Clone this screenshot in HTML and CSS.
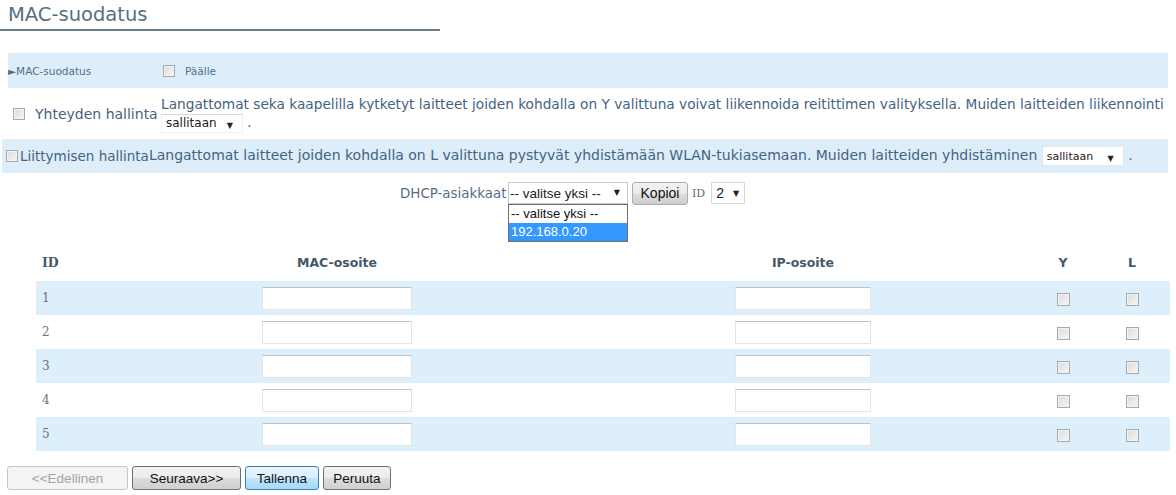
FILE: index.html
```html
<!doctype html>
<html lang="fi">
<head>
	<meta charset="utf-8">
	<title>MAC-suodatus</title>
	<link rel="stylesheet" href="styles.css">
</head>

<body>
	<h1 class="title">MAC-suodatus</h1>

	<div class="opt band first">
		<span class="opt-name">&#9658;MAC-suodatus</span>
		<label class="chk"><input type="checkbox"> Päälle</label>
	</div>

	<div class="opt second">
		<label class="chk big"><input type="checkbox"> Yhteyden hallinta</label>
		<div class="desc">
			Langattomat seka kaapelilla kytketyt laitteet joiden kohdalla on Y valittuna voivat liikennoida reitittimen valityksella. Muiden laitteiden liikennointi
			<span class="sel"><select><option>sallitaan</option><option>estetään</option></select></span> .
		</div>
	</div>

	<div class="opt band third">
		<label class="chk tight"><input type="checkbox">Liittymisen hallinta</label>
		<div class="desc">
			Langattomat laitteet joiden kohdalla on L valittuna pystyvät yhdistämään WLAN-tukiasemaan. Muiden laitteiden yhdistäminen
			<span class="sel"><select><option>sallitaan</option><option>estetään</option></select></span> .
		</div>
	</div>

	<div class="dhcp">
		<span class="dhcp-label">DHCP-asiakkaat</span>
		<span class="sel wide">
			<select><option>-- valitse yksi --</option><option>192.168.0.20</option></select>
			<ul class="droplist">
				<li>-- valitse yksi --</li>
				<li class="hl">192.168.0.20</li>
			</ul>
		</span>
		<button class="btn copy">Kopioi</button>
		<span class="id-label">ID</span>
		<span class="sel small"><select><option>1</option><option selected>2</option><option>3</option><option>4</option><option>5</option></select></span>
	</div>

	<table class="macs">
		<tr>
			<th class="c-id">ID</th>
			<th class="c-mac">MAC-osoite</th>
			<th class="c-ip">IP-osoite</th>
			<th class="c-y">Y</th>
			<th class="c-l">L</th>
		</tr>
		<tr class="odd">
			<td class="c-id">1</td>
			<td class="c-mac"><input type="text" class="mac"></td>
			<td class="c-ip"><input type="text" class="ip"></td>
			<td class="c-y"><input type="checkbox"></td>
			<td class="c-l"><input type="checkbox"></td>
		</tr>
		<tr>
			<td class="c-id">2</td>
			<td class="c-mac"><input type="text" class="mac"></td>
			<td class="c-ip"><input type="text" class="ip"></td>
			<td class="c-y"><input type="checkbox"></td>
			<td class="c-l"><input type="checkbox"></td>
		</tr>
		<tr class="odd">
			<td class="c-id">3</td>
			<td class="c-mac"><input type="text" class="mac"></td>
			<td class="c-ip"><input type="text" class="ip"></td>
			<td class="c-y"><input type="checkbox"></td>
			<td class="c-l"><input type="checkbox"></td>
		</tr>
		<tr>
			<td class="c-id">4</td>
			<td class="c-mac"><input type="text" class="mac"></td>
			<td class="c-ip"><input type="text" class="ip"></td>
			<td class="c-y"><input type="checkbox"></td>
			<td class="c-l"><input type="checkbox"></td>
		</tr>
		<tr class="odd">
			<td class="c-id">5</td>
			<td class="c-mac"><input type="text" class="mac"></td>
			<td class="c-ip"><input type="text" class="ip"></td>
			<td class="c-y"><input type="checkbox"></td>
			<td class="c-l"><input type="checkbox"></td>
		</tr>
	</table>

	<div class="actions">
		<button class="btn prev" disabled>&lt;&lt;Edellinen</button>
		<button class="btn next">Seuraava&gt;&gt;</button>
		<button class="btn save">Tallenna</button>
		<button class="btn cancel">Peruuta</button>
	</div>
</body>
</html>
```

FILE: styles.css
```css
*{ margin: 0px; padding: 0px; box-sizing: border-box; }
body{
	font-family: "DejaVu Sans", Verdana, sans-serif;
	font-size: 11px; color: #46637e;
	background: #fff; width: 1176px; }

.title{
	width: 440px; padding: 4px 0 4px 8px;
	font-size: 19.5px; font-weight: normal; line-height: 21px;
	color: #56707f; border-bottom: 2px solid #6a7f8e; }

/* option rows */
.opt{ display: flex; align-items: center; margin-right: 8px; }
.band{ background-color: #ddeefa; }
.first{ margin-top: 22px; margin-left: 8px; height: 35px; font-size: 10.5px; color: #4f6e8a; }
.opt-name{ width: 155px; }
.second{ height: 51px; }
.third{ height: 34px; margin-left: 2px; }

.chk{ display: flex; align-items: center; white-space: nowrap; }
.chk input{ margin-right: 7px; }
.first .chk input{ margin-right: 10px; }
.big{ font-size: 14px; padding-left: 13px; width: 161px; }
.big input{ margin-right: 10px; }
.tight{ padding-left: 4px; font-size: 13.5px; }
.tight input{ margin-right: 2px; }

.desc{ flex: 1; line-height: 18px; }
.second .desc{ font-size: 13.7px; padding-top: 1px; }
.third .desc{ font-size: 14px; }

input[type=checkbox]{
	appearance: none; -webkit-appearance: none;
	width: 12px; height: 12px; flex: none;
	border: 1px solid #a9a9a9; border-radius: 0;
	background: linear-gradient(135deg, #dcdcdc, #f6f6f6);
	box-shadow: inset 0 0 0 1px #f2f2f2; vertical-align: middle; }

/* selects */
.sel{ position: relative; display: inline-block; vertical-align: middle; }
.sel select{
	appearance: none; -webkit-appearance: none;
	height: 19px; width: 82px; padding: 0 0 0 4px;
	font-family: "DejaVu Sans", Verdana, sans-serif; font-size: 12px;
	color: #222; background: #fff; border: 1px solid #e6e6e6; outline: none; }
.sel::after{
	content: "\25BC"; position: absolute; right: 10px; top: 4px;
	font-size: 8px; color: #222; pointer-events: none; }
.second .sel select{ border-color: #f0f0f0; border-top-color: #d8d8d8; }
.third .sel select{ font-size: 11px; height: 20px; }

.dhcp{ display: flex; align-items: center; padding-left: 400px; margin-top: 7px; height: 26px; }
.dhcp-label{ color: #556f88; width: 108px; font-size: 13.4px; white-space: nowrap; }
.sel.wide select{
	width: 120px; height: 22px; font-family: "Liberation Sans", Arial, sans-serif;
	border: 1px solid #c8c8c8; padding-left: 1px; font-size: 13.5px; }
.sel.wide::after{ right: 8px; top: 6px; }
.sel.small{ margin-left: 6px; }
.sel.small select{
	width: 34px; height: 22px; font-family: "Liberation Sans", Arial, sans-serif;
	font-size: 14px; border: 1px solid #d8d8d8; padding-left: 4px; }
.sel.small::after{ right: 6px; top: 7px; }
.id-label{ font-family: "DejaVu Serif", serif; font-size: 11px; color: #556f88; margin-left: 4px; }

.droplist{
	position: absolute; left: 0; top: 22px; width: 120px;
	list-style: none; background: #fff; border: 1px solid #6f6f6f;
	font-family: "Liberation Sans", Arial, sans-serif; font-size: 13px; color: #111; z-index: 2; }
.droplist li{ height: 18px; line-height: 18px; padding-left: 2px; }
.droplist li.hl{ background: #3399ff; color: #fff; }

/* table */
.macs{ margin-left: 36px; margin-top: 39px; width: 1134px; border-collapse: collapse; }
.macs th{
	height: 36px; padding-bottom: 2px; font-size: 12.5px; font-weight: bold; color: #44586a; }
.macs td{ height: 34px; }
.macs tr.odd td{ background-color: #ddeffb; }
.c-id{ width: 64px; text-align: left; padding-left: 6px; }
th.c-id{ font-family: "DejaVu Serif", serif; }
td.c-id{ font-family: "DejaVu Serif", serif; font-size: 12px; color: #6a7278; }
.c-mac{ width: 474px; text-align: center; }
.c-ip{ width: 458px; text-align: center; }
.c-y{ width: 62px; text-align: center; }
.c-l{ text-align: center; }
.macs td input[type=checkbox]{ width: 13px; height: 13px; margin-top: 2px; }
.macs input[type=text]{
	height: 23px; border: 1px solid #e4e4e4; border-top-color: #c4c4c4;
	background: #fff; outline: none; vertical-align: middle; }
.mac{ width: 150px; }
.ip{ width: 136px; }

/* buttons */
.btn{
	height: 24px; padding: 0 6px; cursor: pointer;
	font-family: "Liberation Sans", Arial, sans-serif; font-size: 13.5px; color: #111;
	border: 1px solid #707070; border-radius: 3px;
	background: linear-gradient(#f2f2f2 0%, #ebebeb 50%, #dddddd 51%, #cfcfcf 100%); }
.copy{ height: 23px; width: 56px; margin-left: 4px; border-color: #acacac; font-size: 14px; }
.actions{ display: flex; gap: 4px; margin: 15px 0 0 7px; }
.prev{ width: 121px; color: #a3a3a3; border-color: #c5c5c5; background: #f4f4f4; cursor: default; }
.next{ width: 109px; }
.save{ width: 74px; border-color: #3c7fb1; background: linear-gradient(#eaf6fd 0%, #d9f0fc 50%, #bee6fd 51%, #a7d9f5 100%); }
.cancel{ width: 68px; }
```
